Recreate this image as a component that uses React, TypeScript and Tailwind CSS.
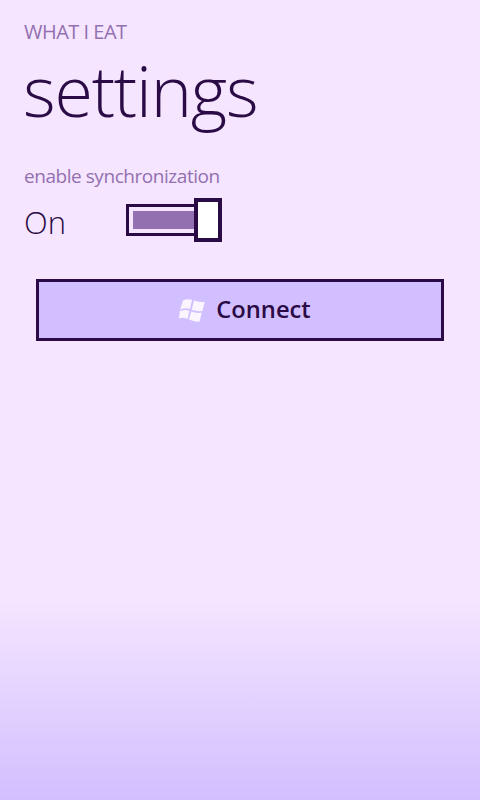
export default function App() {
  return (
    <div className="w-[480px] h-[800px] flex flex-col overflow-hidden bg-[#f5e5ff] text-[#2b0b45] font-['Open_Sans','Noto_Sans',sans-serif]">
      <div className="px-6 pt-[20px]">
        <p className="text-[20px] leading-[24px] tracking-[-0.5px] text-[#9370b0]">WHAT I EAT</p>
        <h1 className="mt-[16px] -ml-[1px] text-[70px] leading-[60px] font-[350] tracking-[-1.2px]">settings</h1>

        <p className="mt-[43px] text-[19px] leading-[26px] tracking-[-0.45px] text-[#9370b0] font-normal">enable synchronization</p>

        {/* Toggle row */}
        <div className="mt-[9px] flex items-center">
          <span className="w-[102px] pt-[4px] text-[31px] leading-[40px] font-[350]">On</span>
          <div className="flex items-center">
            <div className="w-[72px] h-[32px] border-[3px] border-[#2b0b45] p-[4px] pr-0 -mr-[4px]">
              <div className="h-full bg-[#9370b0]" />
            </div>
            <div className="relative w-[28px] h-[44px] bg-white border-[4px] border-[#2b0b45]" />
          </div>
        </div>
      </div>

      <div className="px-9 mt-[37px]">
        <button className="w-full h-[62px] pl-[10px] flex items-center justify-center gap-[11px] bg-[#d2bfff] border-[3px] border-[#2b0b45] text-[23.7px] font-semibold">
          <svg width="26" height="23" viewBox="0 0 26 23" fill="#fbf5ff">
            <path d="M4 1.5C7 0 10 -0.2 13 0.8L11 10C8 9 4.5 9.2 1.2 10.5Z" />
            <path d="M15 1.5C18.5 3 22 3 25.8 3L23.4 12C19.5 12.5 16 12 12.8 10.8Z" />
            <path d="M0.8 12C4 10.8 7.5 10.7 10.4 11.7L8.4 20C5.5 18.5 3 18.5 0 19.5Z" />
            <path d="M12.3 12.6C15.5 13.8 19 14.2 22.8 13.8L20.6 22.5C17 23 13.5 22 10 20.5Z" />
          </svg>
          <span>Connect</span>
        </button>
      </div>

      {/* Bottom fade */}
      <div className="mt-auto h-[200px] bg-gradient-to-b from-[#f5e5ff] to-[#d2bfff]" />
    </div>
  );
}
